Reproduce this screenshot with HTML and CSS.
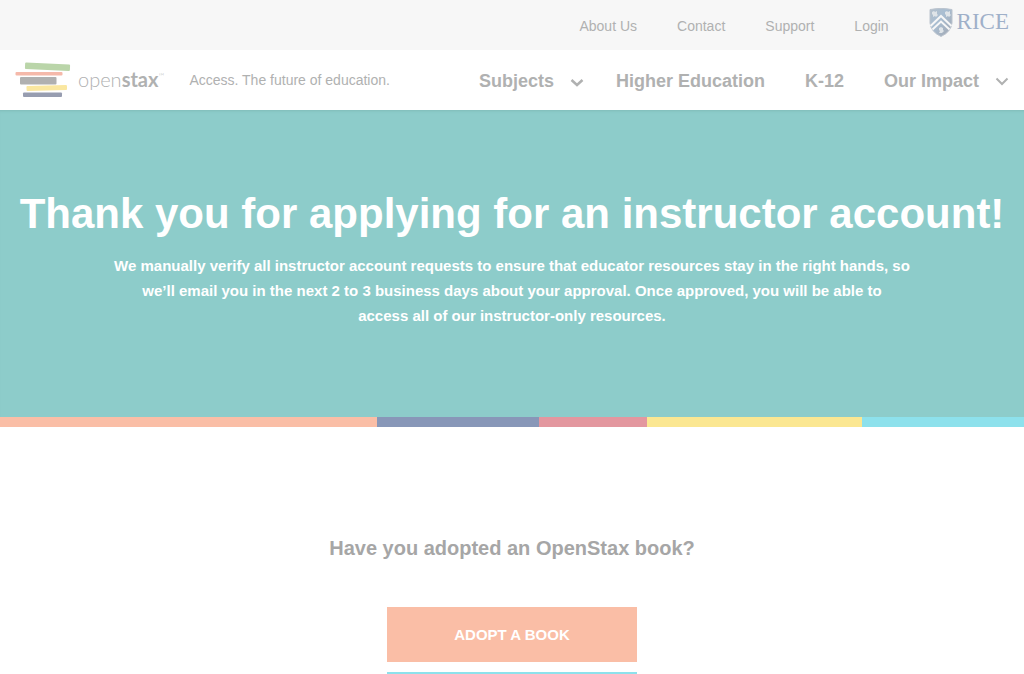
FILE: index.html
```
<!DOCTYPE html>
<html lang="en">
<head>
<meta charset="utf-8">
<meta name="viewport" content="width=device-width, initial-scale=1">
<title>Thank you - OpenStax</title>
<link rel="stylesheet" href="styles.css">
</head>
<body>
<header>
  <nav class="meta-nav" aria-label="Account and help">
    <a href="#about">About Us</a>
    <a href="#contact">Contact</a>
    <a href="#support">Support</a>
    <a href="#login">Login</a>
    <a class="rice" href="#rice">
      <svg class="rice-shield" viewBox="0 0 24 29" aria-hidden="true">
        <defs>
          <linearGradient id="shield" x1="0" y1="0" x2="1" y2="1">
            <stop offset="0" stop-color="#b3bfca"/>
            <stop offset=".4" stop-color="#a9bed2"/>
            <stop offset="1" stop-color="#a3a8b2"/>
          </linearGradient>
        </defs>
        <path d="M1 1.500Q12 -1 23 1.500V15Q22 24 12 28.500Q2 24 1 15Z" fill="url(#shield)" stroke="#bcc4ce" stroke-width="1"/>
        <path d="M1.500 18L12 8L22.500 18M3.500 21.500L12 13.500L20.500 21.500" fill="none" stroke="#f7f7f7" stroke-width="2"/>
        <path d="M3 4l2-1 1 1 2-1v3l1 1-2 2-1-1-2 1V7L3 6ZM16 4l2-1 1 1 2-1v3l1 1-2 2-1-1-2 1V7l-1-1ZM10 20l2-1 2 1v2l1 1-2 2h-3l1-2-1-1Z" fill="#dfe4e8"/>
      </svg>
      <span>RICE</span>
    </a>
  </nav>
  <div class="main-bar">
    <a class="brand" href="#home">
      <svg class="books" viewBox="0 0 56 36" aria-hidden="true">
        <rect x="10" y="1.500" width="45" height="6.500" rx="1" fill="#bad5a9" transform="rotate(2.500 32 5)"/>
        <rect x="0.500" y="10" width="47" height="3.500" rx="1" fill="#f5b9aa"/>
        <rect x="5" y="15" width="36.500" height="7.500" rx="1" fill="#b0b0b0"/>
        <rect x="11.500" y="23.500" width="40.500" height="5" rx="1" fill="#fae7a0" transform="rotate(-1.500 31 26)"/>
        <rect x="8" y="30.500" width="39" height="4.500" rx="1" fill="#979db0"/>
      </svg>
      <span class="wordmark">open<b>stax</b><sup>™</sup></span>
    </a>
    <span class="tagline">Access. The future of education.</span>
    <nav class="main-nav" aria-label="Main">
      <a href="#subjects">Subjects
        <svg class="chevron" viewBox="0 0 14 14" aria-hidden="true"><path d="M1.500 6l5.500 5 5.500-5" fill="none" stroke="currentColor" stroke-width="2.500"/></svg>
      </a>
      <a href="#higher-education">Higher Education</a>
      <a href="#k12">K-12</a>
      <a href="#impact">Our Impact
        <svg class="chevron" viewBox="0 0 14 14" aria-hidden="true"><path d="M1.500 4.500l5.500 5.500 5.500-5.500" fill="none" stroke="currentColor" stroke-width="2"/></svg>
      </a>
    </nav>
  </div>
</header>
<main>
  <section class="hero">
    <h1>Thank you for applying for an instructor account!</h1>
    <p>We manually verify all instructor account requests to ensure that educator resources stay in the right hands, so we’ll email you in the next 2 to 3 business days about your approval. Once approved, you will be able to<br> access all of our instructor-only resources.</p>
  </section>
  <div class="stripes" aria-hidden="true">
    <span class="orange"></span><span class="blue"></span><span class="red"></span><span class="yellow"></span><span class="cyan"></span>
  </div>
  <section class="adopt">
    <h2>Have you adopted an OpenStax book?</h2>
    <div class="action">
      <a class="button" href="#adopt">ADOPT A BOOK</a>
    </div>
  </section>
</main>
</body>
</html>
```
FILE: styles.css
```
* {
  box-sizing: border-box;
}

body {
  margin: 0;
  background: #fff;
  color: #a6a6a6;
  font-family: "Liberation Sans", Arial, sans-serif;
}

a {
  color: inherit;
  text-decoration: none;
}

.meta-nav {
  display: flex;
  justify-content: flex-end;
  align-items: center;
  gap: 40px;
  height: 50px;
  padding: 0 15px;
  background: #f7f7f7;
  color: #b0b1b1;
  font-size: 14px;
  line-height: 20px;
}

.meta-nav a {
  padding-top: 2px;
}

.meta-nav .rice {
  display: flex;
  align-items: center;
  gap: 4px;
  padding: 0 0 6px;
  color: #9fb0c9;
  font-family: "Liberation Serif", serif;
  font-size: 23px;
}

.rice-shield {
  width: 24px;
  height: 29px;
}

.main-bar {
  display: flex;
  align-items: center;
  height: 60px;
  padding: 0 15px;
  color: #b0b1b1;
}

.brand {
  display: flex;
  align-items: center;
  gap: 7px;
}

.books {
  width: 56px;
  height: 36px;
}

.wordmark {
  padding-bottom: 2px;
  font-family: Lato, sans-serif;
  font-size: 20px;
  font-weight: 300;
  line-height: 24px;
}

.wordmark b {
  font-weight: 700;
}

.wordmark sup {
  font-size: 8px;
  line-height: 8px;
}

.tagline {
  margin-left: 25px;
  font-size: 14px;
}

.main-nav {
  display: flex;
  gap: 40px;
  margin-left: auto;
  font-size: 18px;
  font-weight: 700;
  line-height: 24px;
}

.main-nav a {
  display: flex;
  align-items: center;
  gap: 16px;
  padding-top: 2px;
  white-space: nowrap;
}

.main-nav a:first-child {
  margin-right: -8px;
}

.chevron {
  width: 14px;
  height: 14px;
}

.hero {
  display: flex;
  flex-direction: column;
  align-items: center;
  padding: 80px 15px 89px;
  background: #8dccca;
  box-shadow: inset 0 3px 3px -2px #7fbbb9;
  color: #fff;
  text-align: center;
}

.hero h1 {
  margin: 0 0 15px;
  font-size: 42px;
  line-height: 48px;
}

.hero p {
  max-width: 800px;
  margin: 0;
  font-size: 15px;
  font-weight: 700;
  line-height: 25px;
}

.stripes {
  display: grid;
  grid-template-columns: 35fr 15fr 10fr 20fr 15fr;
  height: 10px;
}

.orange {
  background: #fabea6;
}

.blue {
  background: #8897b8;
}

.red {
  background: #e3979f;
}

.yellow {
  background: #fbe792;
}

.cyan {
  background: #8de1ec;
}

.adopt {
  padding: 106px 20px 0;
  text-align: center;
}

.adopt h2 {
  margin: 0 0 44px;
  font-size: 20px;
  line-height: 30px;
}

.action {
  width: 250px;
  margin: 0 auto;
  padding-bottom: 10px;
  border-bottom: 2px solid #8de1ec;
}

.button {
  display: block;
  padding: 15px;
  background: #fabea6;
  color: #fff;
  font-size: 15px;
  font-weight: 700;
  line-height: 25px;
}
```
